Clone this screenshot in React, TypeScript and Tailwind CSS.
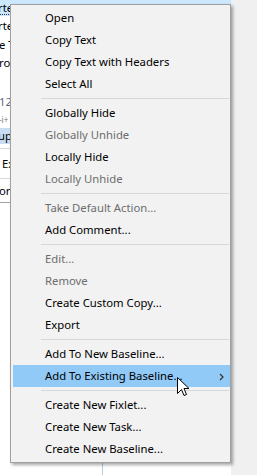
import React from "react";

type Item = { t: string; d?: boolean; h?: boolean; sub?: boolean } | "sep";

const items: Item[] = [
  { t: "Open" },
  { t: "Copy Text" },
  { t: "Copy Text with Headers" },
  { t: "Select All" },
  "sep",
  { t: "Globally Hide" },
  { t: "Globally Unhide", d: true },
  { t: "Locally Hide" },
  { t: "Locally Unhide", d: true },
  "sep",
  { t: "Take Default Action...", d: true },
  { t: "Add Comment..." },
  "sep",
  { t: "Edit...", d: true },
  { t: "Remove", d: true },
  { t: "Create Custom Copy..." },
  { t: "Export" },
  "sep",
  { t: "Add To New Baseline..." },
  { t: "Add To Existing Baseline...", h: true, sub: true },
  "sep",
  { t: "Create New Fixlet..." },
  { t: "Create New Task..." },
  { t: "Create New Baseline..." },
];

export default function App() {
  return (
    <div
      className="relative flex w-[257px] h-[475px] overflow-hidden text-[11.3px] text-black"
      style={{ fontFamily: '"Noto Sans", "Open Sans", sans-serif' }}
    >
      {/* background list area */}
      <div className="flex flex-col w-[231px] bg-white">
        <div className="h-[16px] bg-[#cce8ff] flex items-center overflow-hidden relative">
          <span className="ml-[-2px] leading-none">rte</span>
          <div className="absolute left-0 right-0 bottom-[1px] border-b border-dotted border-[#333]" />
        </div>
        <div className="h-[19px] flex items-center overflow-hidden">
          <span className="ml-[-2px] leading-none">rte</span>
        </div>
        <div className="h-[19px] flex items-center overflow-hidden">
          <span className="ml-[-1px] leading-none">e T</span>
        </div>
        <div className="h-[18px] flex items-center overflow-hidden">
          <span className="ml-[-1px] leading-none">ro</span>
        </div>
        <div className="h-[20px]" />
        <div className="h-[19px] flex items-center overflow-hidden text-[#5a6b80]">
          <span className="ml-[-1px] leading-none">12</span>
        </div>
        <div className="h-[17px] flex items-center overflow-hidden text-[#777]">
          <span className="ml-[-1px] leading-none text-[8px]">-i+</span>
        </div>
        <div className="h-[16px] bg-[#c9def5] flex items-center overflow-hidden">
          <span className="ml-[-2px] leading-none">up</span>
        </div>
        <div className="h-[4px]" />
        <div className="h-[31px] border-y border-[#d9d9d9] flex items-center overflow-hidden">
          <span className="ml-[2px] leading-none">Ex</span>
        </div>
        <div className="h-[24px] border-b border-[#a0a0a0] flex items-center overflow-hidden">
          <span className="ml-[-1px] leading-none">or</span>
        </div>
        <div className="flex-1 flex">
          <div className="w-[103px] border-r border-[#b9cde2]" />
        </div>
      </div>
      <div className="flex-1 bg-[#f0f0f0]" />

      {/* context menu */}
      <div className="absolute left-[10px] top-[4px] w-[221px] border border-[#a0a0a0] bg-[#f2f2f2] pt-[2px] pb-[2px] shadow-[2px_2px_3px_rgba(0,0,0,0.35)]">
        {items.map((it, i) =>
          it === "sep" ? (
            <div key={i} className="h-[7px] flex items-center">
              <div className="h-px flex-1 bg-[#d7d7d7] ml-[30px] mr-[1px]" />
            </div>
          ) : (
            <div
              key={i}
              className={`relative h-[22px] ml-[2px] flex items-center pl-[32px] ${
                it.h ? "bg-[#91c9f7]" : ""
              } ${it.d ? "text-[#6d6d6d]" : "text-black"}`}
            >
              <span className="leading-none whitespace-nowrap">{it.t}</span>
              {it.sub && (
                <svg
                  className="absolute right-[6px] top-[8px]"
                  width="5"
                  height="8"
                  viewBox="0 0 5 8"
                >
                  <polyline
                    points="1,1 4,4 1,7"
                    fill="none"
                    stroke="#333"
                    strokeWidth="1.2"
                  />
                </svg>
              )}
            </div>
          )
        )}
      </div>

      {/* mouse cursor */}
      <svg
        className="absolute left-[177px] top-[377px]"
        width="13"
        height="20"
        viewBox="0 0 13 20"
      >
        <path
          d="M0.5 0.5 L0.5 16.5 L4.5 12.5 L7 18.5 L9.5 17.5 L7 11.5 L12 11.5 Z"
          fill="white"
          stroke="black"
          strokeWidth="1"
          strokeLinejoin="miter"
        />
      </svg>
    </div>
  );
}
